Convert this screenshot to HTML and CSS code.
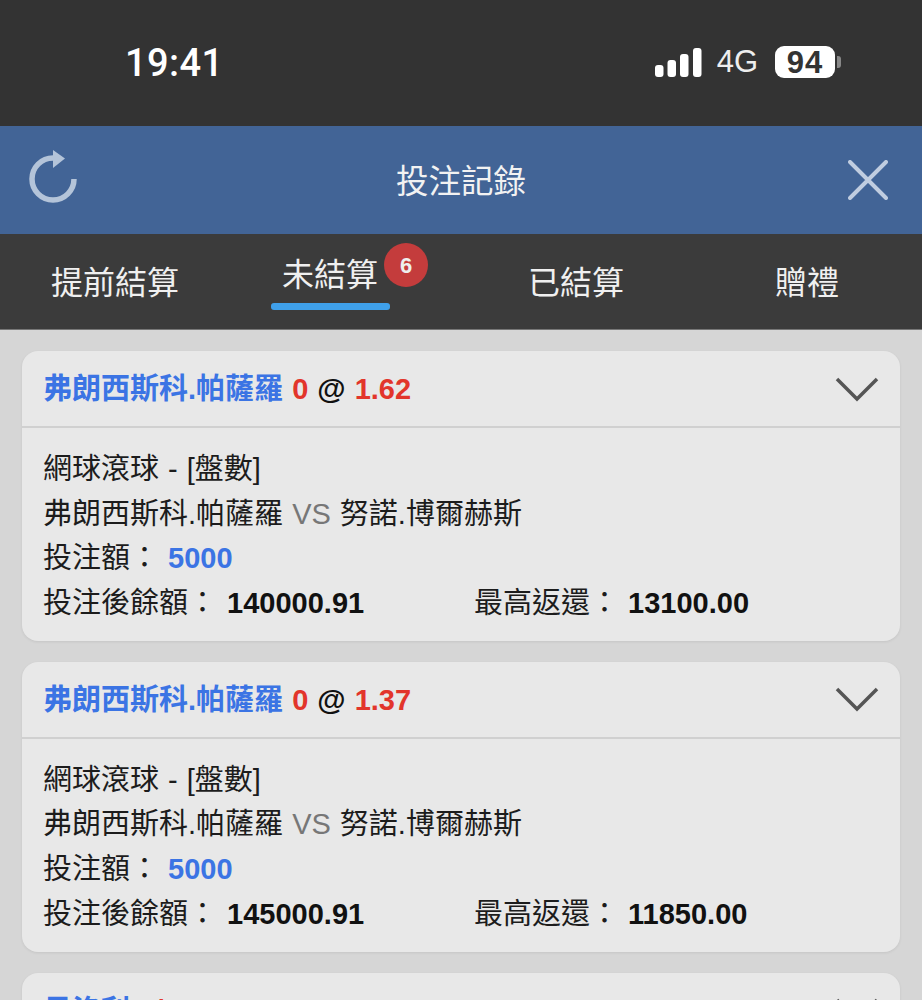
FILE: index.html
```html
<!DOCTYPE html>
<html lang="zh-Hant">
<head>
  <meta charset="UTF-8">
  <meta name="viewport" content="width=device-width, initial-scale=1.0">
  <title>投注記錄</title>
  <link rel="stylesheet" href="styles.css">
</head>
<body>
  <div class="status-bar">
    <div class="time">19:41</div>
    <div class="status-right">
      <svg class="signal" width="49" height="31" viewBox="0 0 49 31">
        <rect x="1" y="18" width="8.5" height="12" rx="3"/>
        <rect x="13.5" y="13" width="8.5" height="17" rx="3"/>
        <rect x="26" y="7" width="8.5" height="23" rx="3"/>
        <rect x="39" y="1" width="8.5" height="29" rx="3"/>
      </svg>
      <span class="net">4G</span>
      <div class="battery"><span class="battery-level">94</span><i class="battery-tip"></i></div>
    </div>
  </div>

  <header class="title-bar">
    <svg class="icon-refresh" width="52" height="60" viewBox="0 0 52 60">
      <path d="M46 29 A21 21 0 1 1 25 8" fill="none" stroke="#b4c4d9" stroke-width="5.5"/>
      <path d="M25 0 L37 8.5 L25 18 Z" fill="#b4c4d9"/>
    </svg>
    <h1>投注記錄</h1>
    <svg class="icon-close" width="40" height="40" viewBox="0 0 40 40">
      <path d="M2 2 L38 38 M38 2 L2 38" stroke="#c0cde0" stroke-width="4" stroke-linecap="round" fill="none"/>
    </svg>
  </header>

  <nav class="tabs">
    <div class="tab">提前結算</div>
    <div class="tab tab-active">未結算<span class="badge">6</span></div>
    <div class="tab">已結算</div>
    <div class="tab">贈禮</div>
  </nav>

  <main class="list">
    <section class="card">
      <div class="card-head">
        <div class="pick"><span class="blue">弗朗西斯科.帕薩羅</span> <span class="red">0</span> <span class="at">@</span> <span class="red">1.62</span></div>
        <svg class="chevron" width="44" height="26" viewBox="0 0 44 26"><path d="M2 3 L22 23 L42 3" fill="none" stroke="#555" stroke-width="3.5"/></svg>
      </div>
      <div class="card-body">
        <div class="row">網球滾球 - [盤數]</div>
        <div class="row">弗朗西斯科.帕薩羅 <span class="vs">VS</span> 努諾.博爾赫斯</div>
        <div class="row">投注額： <b class="blue">5000</b></div>
        <div class="row row-split">
          <div class="col">投注後餘額： <b>140000.91</b></div>
          <div>最高返還： <b>13100.00</b></div>
        </div>
      </div>
    </section>

    <section class="card">
      <div class="card-head">
        <div class="pick"><span class="blue">弗朗西斯科.帕薩羅</span> <span class="red">0</span> <span class="at">@</span> <span class="red">1.37</span></div>
        <svg class="chevron" width="44" height="26" viewBox="0 0 44 26"><path d="M2 3 L22 23 L42 3" fill="none" stroke="#555" stroke-width="3.5"/></svg>
      </div>
      <div class="card-body">
        <div class="row">網球滾球 - [盤數]</div>
        <div class="row">弗朗西斯科.帕薩羅 <span class="vs">VS</span> 努諾.博爾赫斯</div>
        <div class="row">投注額： <b class="blue">5000</b></div>
        <div class="row row-split">
          <div class="col">投注後餘額： <b>145000.91</b></div>
          <div>最高返還： <b>11850.00</b></div>
        </div>
      </div>
    </section>

    <section class="card">
      <div class="card-head">
        <div class="pick"><span class="blue">貝洛利</span> <span class="red">7/6</span> <span class="at">@</span> <span class="red">2.181</span></div>
        <svg class="chevron" width="44" height="26" viewBox="0 0 44 26"><path d="M2 3 L22 23 L42 3" fill="none" stroke="#555" stroke-width="3.5"/></svg>
      </div>
    </section>
  </main>
</body>
</html>
```

FILE: styles.css
```css
html, body {
  height: 1000px;
  overflow: hidden;
}
body {
  margin: 0;
  background-color: #d6d6d6;
  font-family: "Liberation Sans", "Noto Sans CJK TC", sans-serif;
  color: #1c1c1c;
}

.status-bar {
  height: 126px;
  background-color: #333;
  color: #fff;
  display: flex;
  justify-content: space-between;
  padding: 0 81px 0 125px;
  box-sizing: border-box;
}
.time {
  font-family: Roboto, "Liberation Sans", sans-serif;
  font-size: 38px;
  line-height: 44px;
  margin-top: 41px;
  font-weight: 500;
  letter-spacing: 0.4px;
}
.status-right {
  display: flex;
  align-items: center;
  height: 32px;
  margin-top: 46px;
}
.net {
  font-size: 31px;
  margin-left: 14px;
  color: #eee;
}
.battery {
  display: flex;
  align-items: center;
  margin-left: 17px;
}
.battery-level {
  width: 60px;
  height: 32px;
  line-height: 33px;
  border-radius: 9px;
  background-color: #fff;
  color: #333;
  font-size: 31px;
  font-weight: bold;
  letter-spacing: 1px;
  text-align: center;
}
.battery-tip {
  width: 4px;
  height: 12px;
  margin-left: 2px;
  background-color: #888;
  border-radius: 0 3px 3px 0;
}
.signal { fill: #fff; }

.title-bar {
  height: 108px;
  background-color: #426496;
  display: grid;
  grid-template-columns: 1fr auto 1fr;
  align-items: center;
  padding: 0 34px;
}
.title-bar h1 {
  margin: -4px 0 0;
  font-size: 32.5px;
  font-weight: normal;
  color: #f2f2f2;
}
.icon-refresh { margin-left: -6px; }
.icon-close { justify-self: end; }

.tabs {
  height: 96px;
  background-color: #3b3b3b;
  color: #f0f0f0;
  font-size: 32px;
  display: grid;
  grid-template-columns: 230px 230px 232px 230px;
  border-bottom: 1px solid #777;
  box-sizing: border-box;
}
.tab {
  text-align: center;
  line-height: 38px;
  padding-top: 30px;
  position: relative;
}
.tab-active {
  padding-top: 22px;
  padding-right: 30px;
}
.tab-active::after {
  content: "";
  position: absolute;
  left: 41px;
  top: 69px;
  width: 119px;
  height: 7px;
  border-radius: 3px;
  background-color: #3fa0ea;
}
.badge {
  position: absolute;
  left: 154px;
  top: 9px;
  width: 44px;
  height: 44px;
  line-height: 45px;
  border-radius: 50%;
  background-color: #c43c3c;
  color: #eee;
  font-size: 22px;
  font-weight: bold;
}

.list {
  padding: 21px 22px 0;
  display: flex;
  flex-direction: column;
  gap: 21px;
}
.card {
  background-color: #e8e8e8;
  border-radius: 16px;
  box-shadow: 0 1px 3px rgba(0, 0, 0, 0.08);
  flex: none;
}
.card-head {
  height: 75px;
  padding: 0 21px;
  display: flex;
  justify-content: space-between;
  align-items: center;
  border-bottom: 2px solid #d0d0d0;
}
.pick {
  font-size: 29px;
  font-weight: bold;
  margin-top: -5px;
  word-spacing: 1px;
}
.blue { color: #3b74e4; }
.red { color: #e2352b; }
.at { color: #111; }

.card-body {
  padding: 19px 21px 15px;
  font-size: 29px;
  word-spacing: 1px;
}
.row {
  height: 44.7px;
  line-height: 44.7px;
}
.row b {
  font-weight: bold;
  color: #111;
}
.row b.blue { color: #3b74e4; }
.vs { color: #777; }
.row-split { display: flex; }
.col {
  width: 431px;
  word-spacing: 2px;
}
```
